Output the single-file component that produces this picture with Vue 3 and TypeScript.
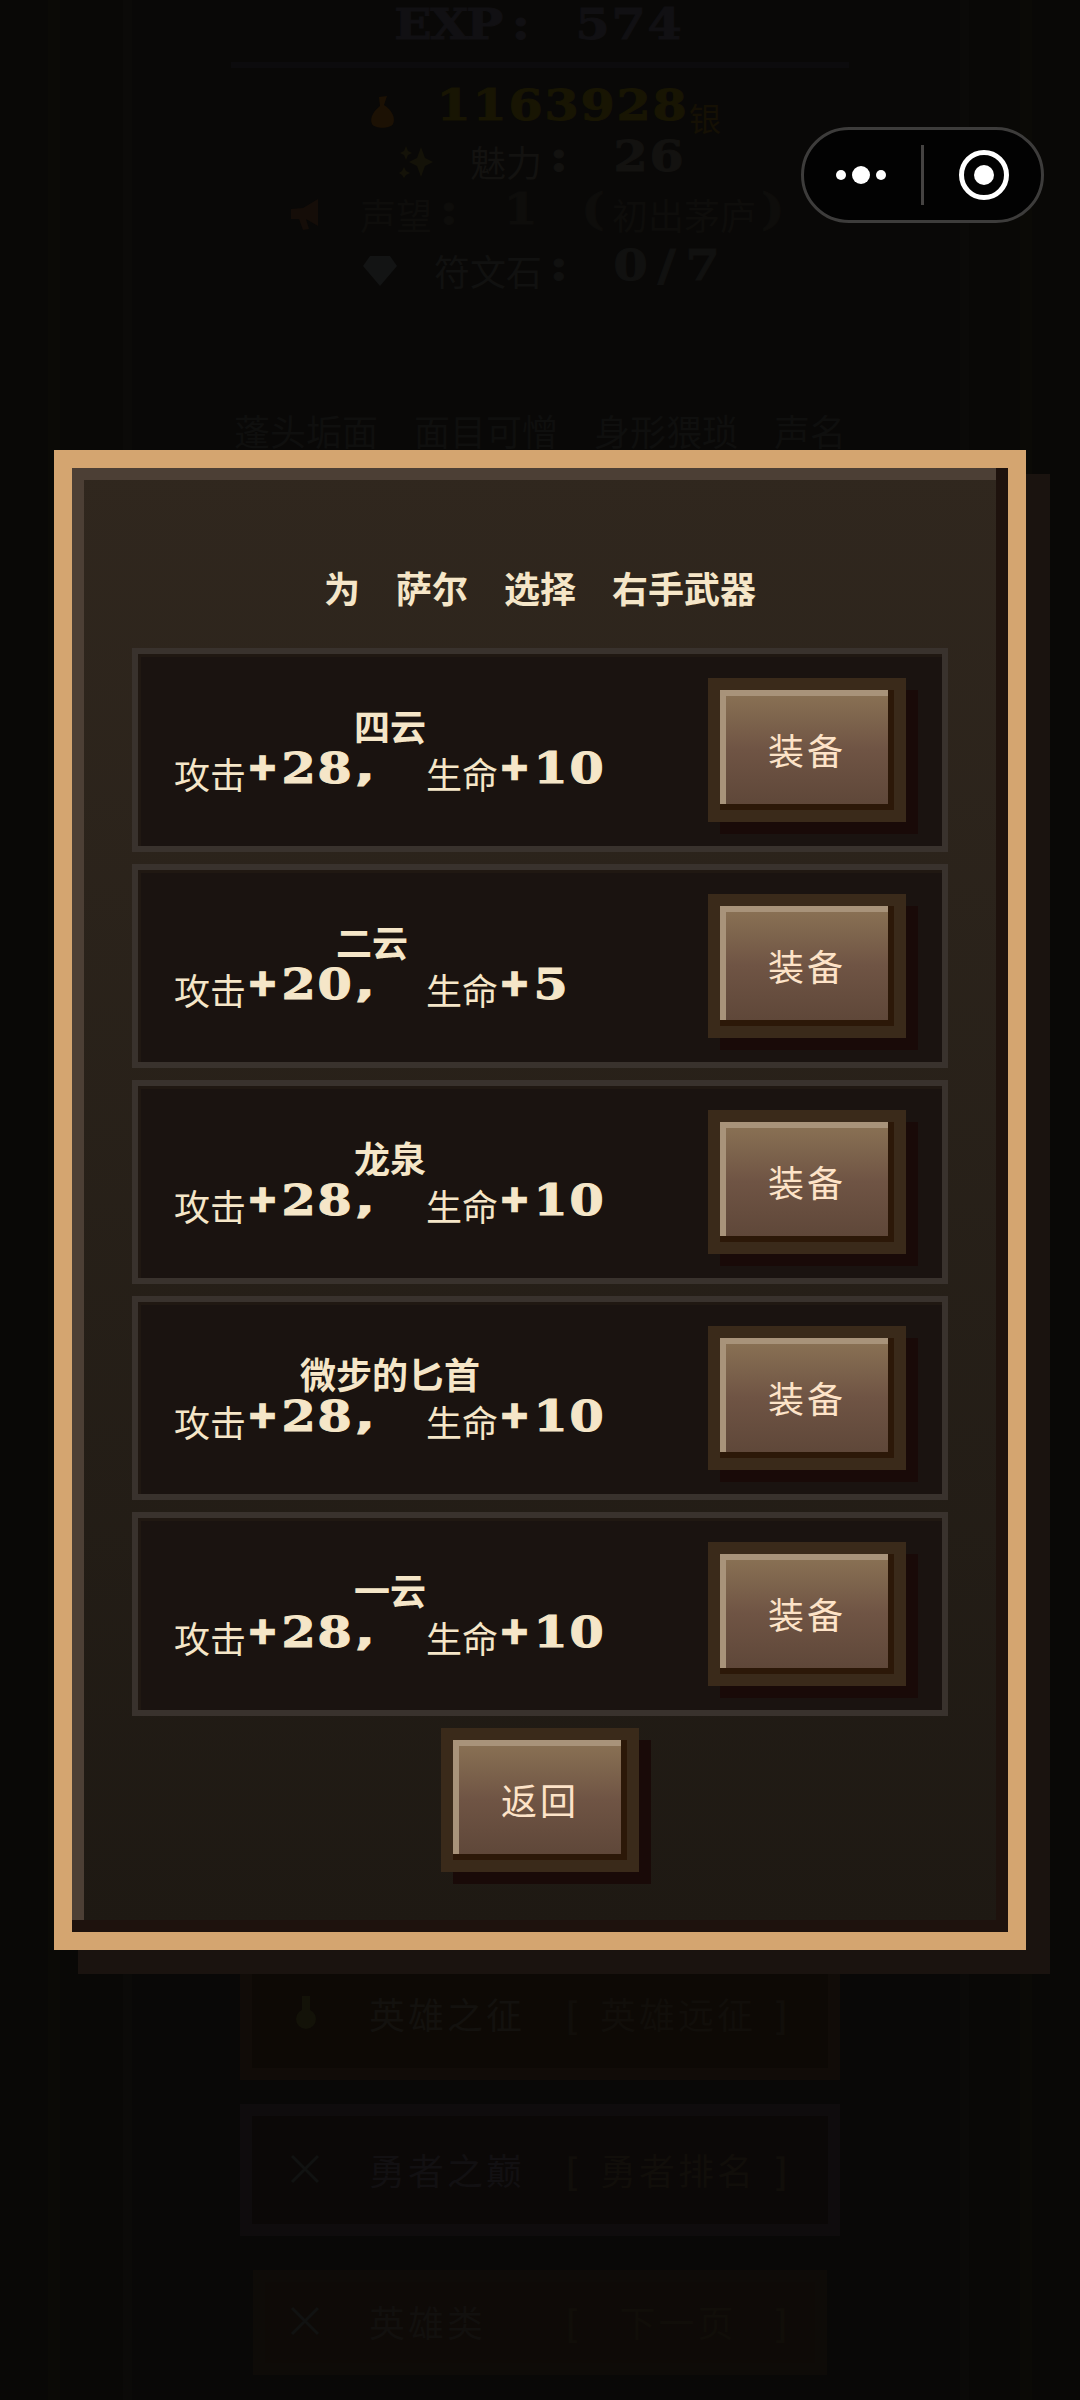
<script setup lang="ts">
import { h, type FunctionalComponent } from 'vue'

interface Weapon {
  name: string
  attack: number
  life: number
}

interface Skill {
  kind: string
  icon: string
  name: string
  note: string
}

const weapons: Weapon[] = [
  { name: '四云', attack: 28, life: 10 },
  { name: '二云', attack: 20, life: 5 },
  { name: '龙泉', attack: 28, life: 10 },
  { name: '微步的匕首', attack: 28, life: 10 },
  { name: '一云', attack: 28, life: 10 },
]

const skills: Skill[] = [
  { kind: 'amber', icon: 'medal', name: '英雄之征', note: '英雄远征' },
  { kind: 'violet', icon: 'swords', name: '勇者之巅', note: '勇者排名' },
  { kind: 'brown', icon: 'swords', name: '英雄类', note: '下一页' },
]

const titleWords = ['为', '萨尔', '选择', '右手武器']

// Latin characters sit in 36px wide cells; Han characters keep their own width.
const PixelText: FunctionalComponent<{ text: string }> = (props) =>
  h(
    'span',
    { class: 'pixel-text' },
    (props.text.match(/[\x20-\x7e]|[^\x20-\x7e]+/g) ?? []).map((part) =>
      /^[\x20-\x7e]$/.test(part)
        ? h('span', { class: ['cell', { plus: part === '+', comma: part === ',' }] }, [h('i', part)])
        : h('span', { class: 'han' }, part),
    ),
  )
PixelText.props = ['text']
</script>

<template>
  <div class="screen">
    <main class="page">
      <div class="frame">
        <section class="stats">
          <div class="row exp"><PixelText text="EXP: 574" /></div>
          <div class="row money">
            <svg class="ico" viewBox="0 0 36 36"><path d="M14 3l8-1-3 9c8 5 12 13 9 19-3 5-18 5-21 0-3-7 3-14 8-18z" fill="#1c1104" /></svg>
            <PixelText text=" 1163928" /><small>银</small>
          </div>
          <div class="row charm">
            <svg class="ico" viewBox="0 0 36 36"><path d="M23 4l4 11 8 4-8 4-4 11-4-11-8-4 8-4zM8 3l2 5 4 2-4 2-2 5-2-5-4-2 4-2zM6 24l2 4 4 2-4 2-2 3-2-3-3-2 3-2z" fill="#141208" /></svg>
            <PixelText text=" 魅力: 26" />
          </div>
          <div class="row fame">
            <svg class="ico" viewBox="0 0 36 36"><path d="M3 13l12-1L30 3v27l-12-7 3 10-6 1-4-11H3z" fill="#150d08" /></svg>
            <PixelText text=" 声望: 1 (初出茅庐)" />
          </div>
          <div class="row rune">
            <svg class="ico" viewBox="0 0 36 36"><path d="M8 4h20l7 10-17 20L1 14z" fill="#131414" /></svg>
            <PixelText text=" 符文石: 0/7" />
          </div>
          <div class="notice">蓬头垢面　面目可憎　身形猥琐　声名</div>
        </section>
        <section class="skills">
          <div v-for="s in skills" :key="s.name" class="skill" :class="s.kind">
            <svg class="ico" viewBox="0 0 36 36">
              <path v-if="s.icon === 'medal'" d="M12 1h8v16h-8zM16 14a10 10 0 1 1 0 20 10 10 0 0 1 0-20z" fill="#131208" />
              <path v-else d="M2 5l26 26M28 5L2 31" fill="none" stroke="#111211" stroke-width="3" />
            </svg>
            <span class="skill-name">{{ s.name }}</span>
            <span class="skill-note"><b>[</b><span>{{ s.note }}</span><b>]</b></span>
          </div>
        </section>
      </div>
    </main>

    <div class="capsule">
      <svg width="243" height="96" viewBox="0 0 243 96">
        <rect x="1.5" y="1.5" width="240" height="93" rx="46.5" fill="#020202" stroke="#3d3c3b" stroke-width="3" />
        <path d="M121.5 18v60" stroke="#454342" stroke-width="3" />
        <g fill="#fff">
          <circle cx="40" cy="48" r="5" />
          <circle cx="60" cy="48" r="9" />
          <circle cx="80" cy="48" r="5" />
          <circle cx="183" cy="48" r="10" />
        </g>
        <circle cx="183" cy="48" r="22.5" fill="none" stroke="#fff" stroke-width="5" />
      </svg>
    </div>

    <div class="overlay">
      <section class="dialog">
        <h2 class="title"><span v-for="w in titleWords" :key="w">{{ w }}</span></h2>
        <ul class="list">
          <li v-for="w in weapons" :key="w.name" class="item">
            <div class="info">
              <div class="name">{{ w.name }}</div>
              <div class="bonus"><PixelText :text="`攻击+${w.attack}, 生命+${w.life}`" /></div>
            </div>
            <button class="btn" type="button">装备</button>
          </li>
        </ul>
        <button class="btn back" type="button">返回</button>
      </section>
    </div>
  </div>
</template>

<style>
body {
  background: #090806;
}
.pixel-text {
  display: inline-flex;
  align-items: baseline;
  white-space: pre;
}
.pixel-text .cell {
  display: inline-flex;
  justify-content: center;
  width: 36px;
  font: 700 42px/42px 'DejaVu Serif', serif;
  position: relative;
  top: -6px;
}
.pixel-text .cell i {
  font-style: normal;
  -webkit-text-stroke: 1px currentColor;
  transform: translateX(-1px) scaleX(1.17);
}
.pixel-text .cell.plus i {
  font-family: 'DejaVu Sans', sans-serif;
  -webkit-text-stroke: 3px currentColor;
  transform: translate(-1px, -2px) scale(0.84);
}
.pixel-text .cell.comma i {
  font-family: 'DejaVu Sans', sans-serif;
  transform: translate(-7px, -1px) scale(1.25, 0.9);
}
</style>

<style scoped>
.screen {
  position: relative;
  width: 1080px;
  height: 2400px;
  overflow: hidden;
  background: #090806;
  font-family: 'Noto Sans CJK SC', sans-serif;
  font-size: 36px;
}
.page {
  height: 100%;
  box-sizing: border-box;
  padding: 0 48px;
}
.frame {
  display: flex;
  flex-direction: column;
  justify-content: space-between;
  height: 100%;
  box-sizing: border-box;
  border: solid #0b0a06;
  border-width: 0 12px;
  padding: 0 63px 25px;
  background: linear-gradient(90deg, #090806 63px, #0b0a08 63px, #0b0a08 72px, #090807 72px, #090807 900px, #0b0a08 900px, #0b0a08 909px, #090806 909px);
}
.stats {
  display: flex;
  flex-direction: column;
  align-items: center;
  color: #12110f;
}
.row {
  display: flex;
  align-items: center;
  justify-content: center;
  height: 56px;
}
.exp {
  width: 618px;
  height: 62px;
  border-bottom: 6px solid #0c0b0d;
  color: #111013;
}
.money {
  height: 88px;
  margin-left: 6px;
  color: #181503;
}
.money small {
  font-size: 32px;
  margin-top: 10px;
  color: #151004;
}
.charm {
  height: 10px;
  margin: 0 0 20px 4px;
  color: #131210;
}
.fame {
  color: #0e0d0b;
}
.rune {
  margin-left: 4px;
  color: #111110;
}
.notice {
  margin-top: 105px;
  height: 54px;
  line-height: 54px;
  white-space: nowrap;
  color: #0f0f0e;
}
.ico {
  flex: none;
  width: 36px;
  height: 36px;
}
.skills {
  display: flex;
  flex-direction: column;
  align-items: center;
}
.skill {
  display: flex;
  align-items: center;
  box-sizing: border-box;
  width: 600px;
  height: 132px;
  margin-bottom: 24px;
  padding: 0 0 3px 38px;
  border: 12px solid #110c08;
  background: #0d0905;
  color: #13110e;
  letter-spacing: 3px;
}
.skill-name {
  width: 156px;
  margin-left: 43px;
}
.skill-note {
  display: flex;
  justify-content: space-between;
  width: 226px;
  margin-left: 40px;
  color: #110e0a;
}
.violet {
  margin-bottom: 34px;
  border-color: #0f0c0d;
  background: #0b0807;
  color: #121012;
}
.brown {
  width: 574px;
  height: 105px;
  margin-bottom: 0;
  padding-left: 25px;
  border-color: #0e0b08;
  background: #0e0a07;
  color: #12100e;
}
.brown .skill-note {
  color: #110e09;
}
.capsule {
  position: absolute;
  top: 127px;
  left: 801px;
}
.capsule svg {
  display: block;
}
.overlay {
  position: absolute;
  inset: 450px 0 auto;
  display: flex;
  justify-content: center;
}
.dialog {
  display: flex;
  flex-direction: column;
  align-items: center;
  box-sizing: border-box;
  width: 972px;
  height: 1500px;
  padding: 92px 60px 0;
  border: 18px solid #d4a570;
  background: linear-gradient(180deg, #30271e, #1e1913);
  background-clip: padding-box;
  box-shadow: inset -12px -12px 0 #1e120d, inset 12px 12px 0 #4c3f35, 24px 24px 0 #1a130f;
  color: #f5e6c8;
}
.title {
  display: flex;
  gap: 36px;
  margin: 0 0 34px;
  font-size: 36px;
  line-height: 54px;
  font-weight: 700;
}
.list {
  display: flex;
  flex-direction: column;
  gap: 12px;
  width: 816px;
  margin: 0;
  padding: 0;
  list-style: none;
}
.item {
  display: flex;
  align-items: center;
  justify-content: space-between;
  box-sizing: border-box;
  height: 204px;
  padding: 0 36px;
  border: 6px solid #39322d;
  background: #1a1310;
  box-shadow: inset 3px 3px 0 #201812;
}
.info {
  padding-bottom: 2px;
  text-align: center;
}
.name {
  height: 48px;
  line-height: 48px;
  font-weight: 700;
}
.bonus {
  display: flex;
  height: 48px;
  line-height: 48px;
}
.btn {
  flex: none;
  box-sizing: border-box;
  width: 198px;
  height: 144px;
  margin: 0;
  padding: 0 0 3px;
  border: 12px solid #3a2a1a;
  border-radius: 0;
  background: linear-gradient(180deg, #8b7355 0%, #6f5444 50%, #5d4638 100%);
  box-shadow: inset -6px -6px 0 #2c1808, inset 6px 6px 0 #a8937a, 12px 12px 0 #190a08;
  color: #fde3c8;
  font: 400 36px/54px 'Noto Sans CJK SC', sans-serif;
  letter-spacing: 3px;
}
.back {
  margin-top: 12px;
}
</style>
